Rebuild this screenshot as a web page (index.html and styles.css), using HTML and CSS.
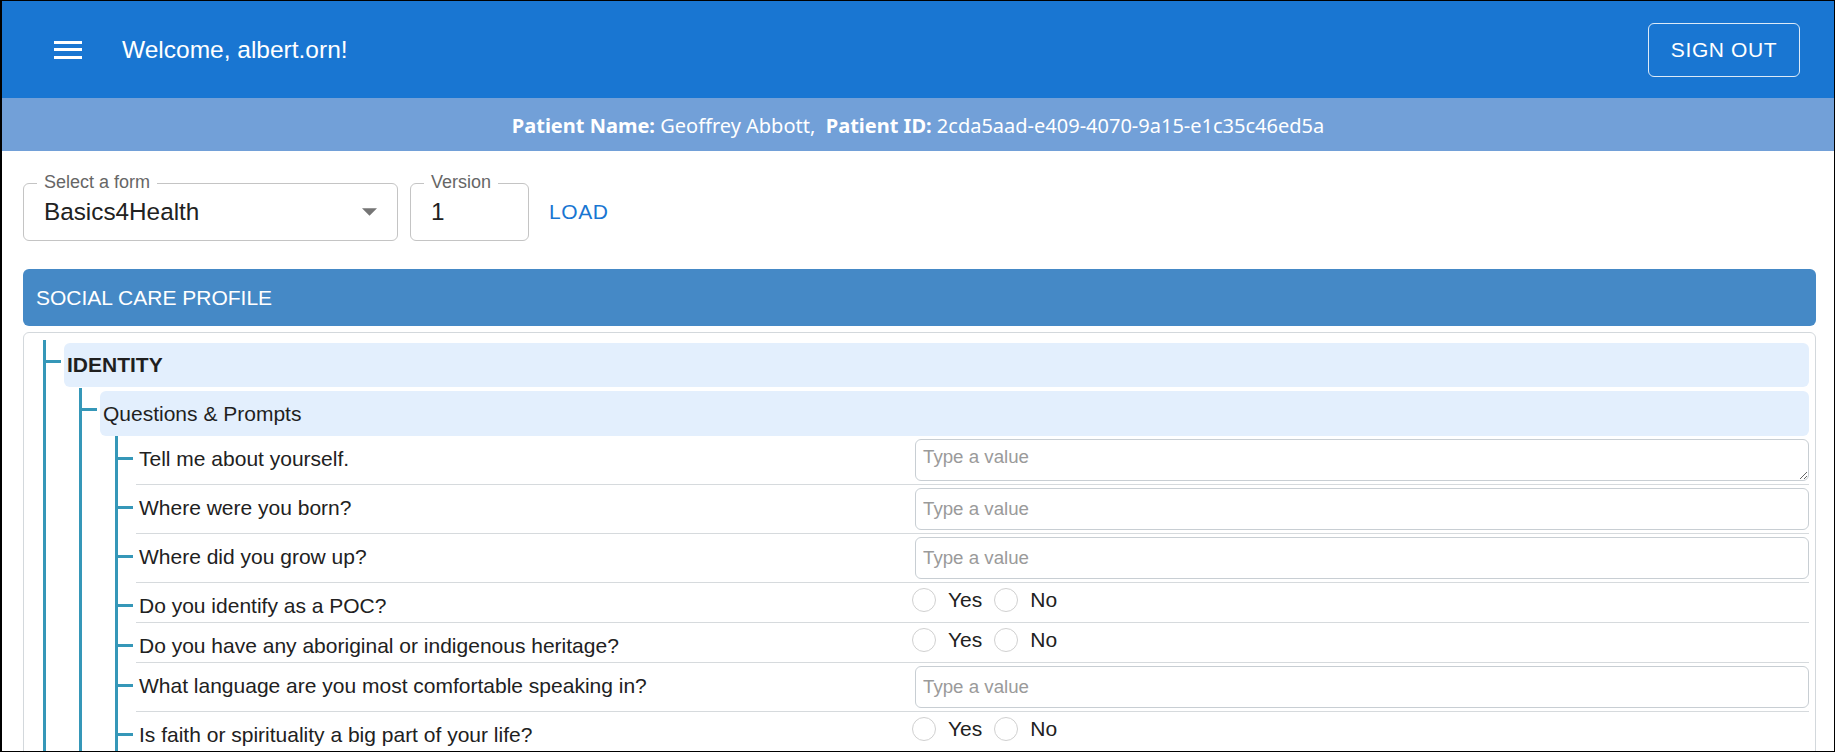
FILE: index.html
```html
<!DOCTYPE html>
<html lang="en">
<head>
<meta charset="utf-8">
<title>Social Care Profile</title>
<link rel="stylesheet" href="styles.css">
</head>
<body>
<div class="frame">
  <header class="appbar">
    <button class="menu-btn" aria-label="menu">
      <svg width="28" height="18" viewBox="0 0 28 18" fill="#fff"><rect x="0" y="0" width="28" height="3"/><rect x="0" y="7" width="28" height="3"/><rect x="0" y="15" width="28" height="3"/></svg>
    </button>
    <div class="welcome">Welcome, albert.orn!</div>
    <button class="signout">Sign out</button>
  </header>

  <div class="patient-bar">
    <span><b>Patient Name:</b> Geoffrey Abbott,&nbsp; <b>Patient ID:</b> 2cda5aad-e409-4070-9a15-e1c35c46ed5a</span>
  </div>

  <main class="content">
    <div class="form-row">
      <div class="field field-select">
        <span class="field-label">Select a form</span>
        <span class="field-value">Basics4Health</span>
        <svg class="caret" width="15" height="8" viewBox="0 0 10 5"><path d="M0 0l5 5 5-5z"/></svg>
      </div>
      <div class="field field-version">
        <span class="field-label">Version</span>
        <span class="field-value">1</span>
      </div>
      <button class="load">Load</button>
    </div>

    <div class="section-head">Social Care Profile</div>

    <div class="card">
      <div class="tree tree-1">
        <div class="node">
          <div class="row"><span class="tick"></span><div class="label label-1">IDENTITY</div></div>
          <div class="tree tree-2">
            <div class="node">
              <div class="row"><span class="tick"></span><div class="label label-2">Questions &amp; Prompts</div></div>
              <div class="tree tree-3">
                <div class="q"><span class="tick"></span>
                  <div class="q-body">
                    <div class="q-text">Tell me about yourself.</div>
                    <div class="q-field"><textarea class="text-input area" placeholder="Type a value"></textarea></div>
                  </div>
                </div>
                <div class="q"><span class="tick"></span>
                  <div class="q-body">
                    <div class="q-text">Where were you born?</div>
                    <div class="q-field"><input class="text-input" type="text" placeholder="Type a value"></div>
                  </div>
                </div>
                <div class="q"><span class="tick"></span>
                  <div class="q-body">
                    <div class="q-text">Where did you grow up?</div>
                    <div class="q-field"><input class="text-input" type="text" placeholder="Type a value"></div>
                  </div>
                </div>
                <div class="q"><span class="tick"></span>
                  <div class="q-body q-radio">
                    <div class="q-text">Do you identify as a POC?</div>
                    <div class="radios"><span class="radio"></span><span class="radio-label">Yes</span><span class="radio"></span><span class="radio-label">No</span></div>
                  </div>
                </div>
                <div class="q"><span class="tick"></span>
                  <div class="q-body q-radio">
                    <div class="q-text">Do you have any aboriginal or indigenous heritage?</div>
                    <div class="radios"><span class="radio"></span><span class="radio-label">Yes</span><span class="radio"></span><span class="radio-label">No</span></div>
                  </div>
                </div>
                <div class="q"><span class="tick"></span>
                  <div class="q-body">
                    <div class="q-text">What language are you most comfortable speaking in?</div>
                    <div class="q-field"><input class="text-input" type="text" placeholder="Type a value"></div>
                  </div>
                </div>
                <div class="q"><span class="tick"></span>
                  <div class="q-body q-radio">
                    <div class="q-text">Is faith or spirituality a big part of your life?</div>
                    <div class="radios"><span class="radio"></span><span class="radio-label">Yes</span><span class="radio"></span><span class="radio-label">No</span></div>
                  </div>
                </div>
              </div>
            </div>
          </div>
        </div>
      </div>
    </div>
  </main>
</div>
</body>
</html>
```

FILE: styles.css
```css
html, body {
  margin: 0;
  padding: 0;
  background: #fff;
}

body {
  font-family: "Liberation Sans", Arial, sans-serif;
  color: #212121;
}

.frame {
  height: 752px;
  box-sizing: border-box;
  border-top: 1px solid #000;
  border-left: 2px solid #000;
  border-right: 1px solid #000;
  border-bottom: 1px solid #000;
  overflow: hidden;
  display: flex;
  flex-direction: column;
}

/* ---------- app bar ---------- */
.appbar {
  flex: none;
  height: 97px;
  background: #1976d2;
  display: flex;
  align-items: center;
  padding: 0 34px 0 52px;
}

.menu-btn {
  background: none;
  border: 0;
  padding: 0;
  width: 28px;
  height: 18px;
  display: flex;
  cursor: pointer;
}

.welcome {
  margin-left: 40px;
  color: #fff;
  font-size: 24.5px;
  line-height: 30px;
}

.signout {
  margin-left: auto;
  width: 152px;
  height: 54px;
  background: transparent;
  color: #fff;
  border: 1px solid rgba(255, 255, 255, 0.85);
  border-radius: 6px;
  font-family: "Liberation Sans", Arial, sans-serif;
  font-size: 21px;
  letter-spacing: 0.6px;
  text-transform: uppercase;
  padding: 0;
  cursor: pointer;
}

/* ---------- patient bar ---------- */
.patient-bar {
  flex: none;
  height: 53px;
  background: #72a0d8;
  color: #fff;
  display: flex;
  align-items: center;
  justify-content: center;
  font-family: "Noto Sans", "Open Sans", sans-serif;
  font-size: 20px;
  padding-top: 2px;
  box-sizing: border-box;
}

.patient-bar b {
  font-weight: 700;
}

/* ---------- content ---------- */
.content {
  padding: 32px 18px 0 21px;
}

.form-row {
  display: flex;
  align-items: center;
}

.field {
  position: relative;
  height: 58px;
  box-sizing: border-box;
  border: 1px solid #c4c4c4;
  border-radius: 6px;
  display: flex;
  align-items: center;
  padding: 0 20px;
}

.field-select {
  width: 375px;
  justify-content: space-between;
}

.field-version {
  width: 119px;
  margin-left: 12px;
}

.field-label {
  position: absolute;
  top: -12px;
  left: 13px;
  padding: 0 7px;
  background: #fff;
  color: #666;
  font-size: 18px;
  line-height: 20px;
}

.field-value {
  font-size: 24.3px;
  color: #212121;
}

.caret {
  fill: #757575;
}

.load {
  margin-left: 20px;
  background: none;
  border: 0;
  padding: 0;
  color: #1976d2;
  font-family: "Liberation Sans", Arial, sans-serif;
  font-size: 21px;
  letter-spacing: 0.6px;
  text-transform: uppercase;
  cursor: pointer;
}

.section-head {
  margin-top: 28px;
  height: 57px;
  box-sizing: border-box;
  background: #4589c6;
  border-radius: 6px;
  color: #fff;
  font-size: 21px;
  text-transform: uppercase;
  display: flex;
  align-items: center;
  padding-left: 13px;
}

.card {
  margin-top: 6px;
  border: 1px solid #d3d8dc;
  border-radius: 6px;
  padding: 7px 6px 0 19px;
}

/* ---------- tree ---------- */
.tree {
  border-left: 3px solid #3597b8;
}

.tree-1 {
  padding-top: 3px;
}

.tree-2 {
  margin-left: 33px;
  margin-top: 1px;
  padding-top: 3px;
}

.tree-3 {
  margin-left: 33px;
  padding-bottom: 40px;
}

.row {
  display: flex;
  align-items: flex-start;
  gap: 3px;
}

.tick {
  flex: none;
  width: 15px;
  height: 3px;
  background: #3597b8;
}

.row .tick {
  margin-top: 17px;
}

.label {
  flex: 1;
  background: #e3effd;
  border-radius: 6px;
  display: flex;
  align-items: center;
  padding-left: 3px;
  color: #1f1f1f;
}

.label-1 {
  height: 44px;
  font-weight: 700;
  font-size: 21px;
}

.label-2 {
  height: 45px;
  font-size: 21px;
}

.q {
  display: flex;
  align-items: flex-start;
  gap: 3px;
}

.q .tick {
  margin-top: 21px;
}

.q-body {
  flex: 1;
  display: grid;
  grid-template-columns: 776px 1fr;
  align-items: start;
  border-bottom: 1px solid #d6dadd;
  padding: 3px 0;
}

.q-body.q-radio {
  padding: 0;
  height: 40px;
  box-sizing: border-box;
}

.q-text {
  font-size: 21px;
  line-height: 24px;
  padding: 8px 0 0 3px;
  color: #212121;
}

.q-radio .q-text {
  padding-top: 11px;
}

.q-field {
  padding-left: 3px;
}

.text-input {
  display: block;
  width: 100%;
  height: 42px;
  box-sizing: border-box;
  margin: 0;
  border: 1px solid #c8ced3;
  border-radius: 6px;
  padding: 0 7px;
  font-family: "Liberation Sans", Arial, sans-serif;
  font-size: 18.7px;
  color: #212121;
  background: #fff;
  outline: none;
}

.text-input.area {
  padding: 6px 7px;
  line-height: 22px;
  resize: vertical;
}

.text-input::placeholder {
  color: #9a9a9a;
}

.radios {
  display: flex;
  align-items: center;
  padding-top: 5px;
}

.radio {
  width: 24px;
  height: 24px;
  box-sizing: border-box;
  border: 1px solid #d0d0d0;
  border-radius: 50%;
  flex: none;
}

.radio-label {
  font-size: 21px;
  line-height: 24px;
  margin: 0 12px;
  color: #212121;
}
```
